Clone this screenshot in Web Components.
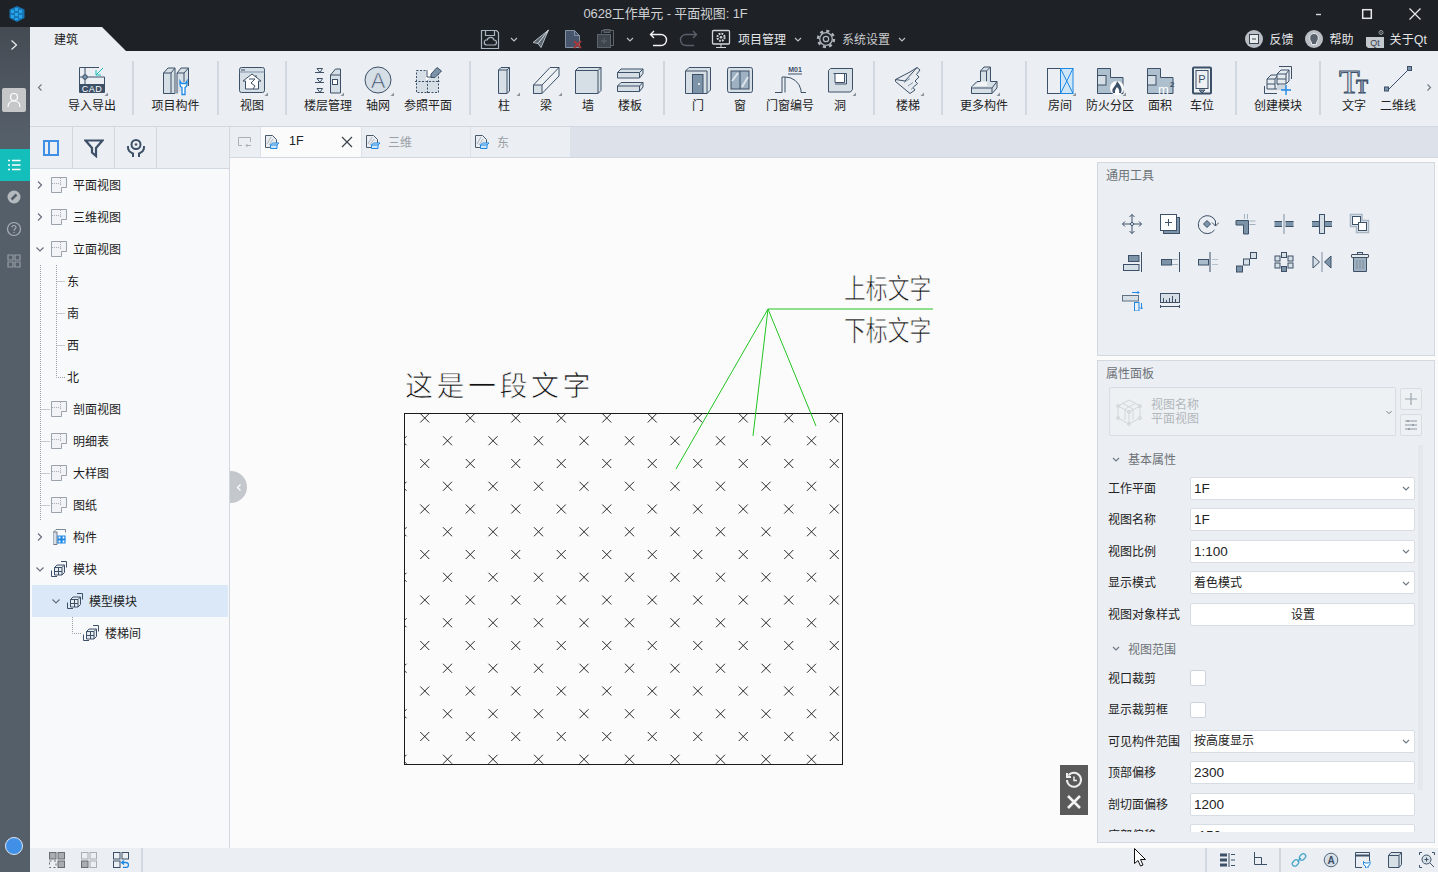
<!DOCTYPE html>
<html lang="zh">
<head>
<meta charset="utf-8">
<title>0628工作单元 - 平面视图: 1F</title>
<style>
html,body{margin:0;height:100%;overflow:hidden;background:#fbfbfb}
</style>
</head>
<body>
<app-shell></app-shell>
<script>
const D='#3c5068',L='#d6dee6',M='#7d93a8',B='#1e88e5',G='#a6adb5';
const SANS='font-family="Liberation Sans"';
const MORE='<path d="M32 28.5V32H28.5Z" fill="#8b949d" stroke="none"/>';
const cubes=(c=D)=>`<g stroke="${c}"><path d="M.5 9.5V15.5H6M15.5 6.5V.5H10"/><path d="M3.500 6.500L6 4H13.500V11.500L11 14H3.500Z" fill="#e6ebf0"/><path d="M3.500 6.500H11V14M11 6.500L13.500 4M7.500 6.500V14M3.500 10.500H11"/></g>`;
const ICONS={
  // barra de titulo
  logo:[18,`<g stroke="none"><path d="M9 1L16.500 4.500V13L9 17L1.500 13V4.500Z" fill="#1577b8"/><path d="M3 5h3v3H3zM7 3h3v3H7zM11 5h3v3h-3zM3 10h3v3H3zM7 8h3v3H7zM11 10h3v3h-3zM7 13h3v2H7z" fill="#2aa3e6"/></g>`],
  save:[22,`<g stroke="#a9b5c1" stroke-width="1.200"><path d="M2.500 2.500H17.500L19.500 4.500V20.500H2.500Z"/><path d="M6.500 2.500V7.500H15.500V2.500"/><path d="M7.500 17H15A2.500 2.500 0 0 0 15 12A3.500 3.500 0 0 0 8.300 11.800A2.600 2.600 0 0 0 7.500 17Z"/></g>`],
  chevw:[12,`<path d="M3 5L6 8L9 5" stroke="#b9c0c7" stroke-width="1.200"/>`],
  chevd:[12,`<path d="M3 5L6 8L9 5" stroke="#6f7b86" stroke-width="1.200"/>`],
  send:[22,`<path d="M18.500 2L3 14.500L8 15.500L11 19.500Z" fill="#5d6771" stroke="#b4bcc4"/><path d="M18.500 2L8 15.500" stroke="#d3d8dd"/>`],
  docx:[22,`<path d="M3.500 2.500H12.500L17.500 7.500V19.500H3.500Z" fill="#47556c" stroke="#8392a3"/><path d="M12.500 2.500V7.500H17.500" stroke="#8392a3"/><path d="M12 13L19 20M19 13L12 20" stroke="#a33a38" stroke-width="2"/>`],
  clip:[22,`<g stroke="#5d646b"><path d="M7.500 5.500V2.500H19.500V17.500H16.500"/><rect x="3.500" y="6.500" width="13" height="13" fill="#3f454c"/><path d="M10 10V16M7 13H13"/><rect x="10" y="1.500" width="6" height="3" fill="#3f454c"/></g>`],
  undo:[22,`<path d="M7 3L3.500 6.500L7 10M3.500 6.500H14A5.500 5.500 0 0 1 14 17.500H6" stroke="#f0f2f4" stroke-width="1.400"/>`],
  redo:[22,`<path d="M15 3L18.500 6.500L15 10M18.500 6.500H8A5.500 5.500 0 0 0 8 17.500H16" stroke="#59606a" stroke-width="1.400"/>`],
  mon:[22,`<g stroke="#d2d6da"><rect x="2.500" y="2.500" width="17" height="13.500" rx="1" stroke-width="1.300"/><path d="M11 16V19M6 19.500H16"/></g><circle cx="11" cy="9.200" r="3.600" stroke="#d2d6da" stroke-width="2" stroke-dasharray="1.800 1.030"/><circle cx="11" cy="9.200" r="1.300" fill="#d2d6da" stroke="none"/>`],
  gear:[22,`<circle cx="11" cy="11" r="8" stroke="#aeb5bc" stroke-width="2.400" stroke-dasharray="3.100 3.180"/><circle cx="11" cy="11" r="6.300" stroke="#aeb5bc" stroke-width="1.300"/><circle cx="11" cy="11" r="2.700" stroke="#aeb5bc" stroke-width="1.300"/>`],
  fb:[22,`<circle cx="11" cy="11" r="9" fill="#b9bfc5" stroke="none"/><rect x="6.500" y="6.500" width="9" height="9" fill="#e8eaec" stroke="#39424c"/><path d="M9 11H13" stroke="#39424c"/>`],
  bulb:[22,`<circle cx="11" cy="11" r="9" fill="#b9bfc5" stroke="none"/><path d="M8.500 14.500C5 10.500 7 5.500 11 5.500S17 10.500 13.500 14.500V16.500H8.500Z" fill="#59626c" stroke="#e8eaec"/>`],
  qt:[22,`<path d="M2 9H20V20H4L2 18Z" fill="#c4c9ce" stroke="none"/><text x="11" y="18" font-size="9" ${SANS} fill="#39424c" stroke="none" text-anchor="middle">Qt</text><circle cx="17" cy="4.500" r="2" stroke="#9aa2aa"/><path d="M16 3.500L18 5.500M18 3.500L16 5.500" stroke="#9aa2aa" stroke-width=".6"/>`],
  min:[12,`<path d="M3 6.500H8" stroke="#d7dadd" stroke-width="1.400"/>`],
  max:[12,`<rect x="1.700" y="1.700" width="8.600" height="8.600" stroke="#e4e6e8" stroke-width="1.500"/>`],
  cls:[12,`<path d="M.500 .500L11.500 11.500M11.500 .500L.500 11.500" stroke="#e4e6e8" stroke-width="1.300"/>`],
  // cinta
  cad:[32,`<path d="M3.500 21V3.500H23M9 3.500V21M3.500 13H28.500V21"/><circle cx="9" cy="13" r="2.300" fill="${M}"/><rect x="3" y="20" width="26" height="9" rx="1" fill="${D}" stroke="none"/><text x="16" y="28" font-size="9" ${SANS} fill="#fff" stroke="none" text-anchor="middle" letter-spacing=".5">CAD</text><path d="M27 4L20 11M20 6V11H25" stroke="#18bdb9"/>${MORE}`],
  comp:[32,`<path d="M3.500 29.500V9L8 4H15V29.500Z" fill="${L}"/><path d="M3.500 9H11V29.500M11 9L15 4"/><path d="M17 29.500V9L21 4H28.500V22" fill="${L}"/><path d="M17 9H24V18M24 9L28.500 4"/><path d="M20 17V20.500A3.500 3.500 0 0 0 22 23.500V30.500H25V23.500A3.500 3.500 0 0 0 27 20.500V17L25.500 19.500H21.500Z" fill="#fff" stroke="${B}" stroke-width="1.300"/>`],
  view:[32,`<rect x="3.500" y="3.500" width="25" height="25" rx="2" fill="${L}"/><path d="M5 6H9" /><path d="M3.500 8H28.500" stroke="${M}"/><path d="M16 10L25 17H22.500V25H9.500V17H7Z" fill="#fff"/><path d="M13 15H19L15 19L19 22L17 25" stroke="${D}"/><path d="M20 11V13" />${MORE}`],
  floors:[32,`<path d="M3 8.500H12M5 4.500H10.500L8 8.500ZM3 18.500H12M5 14.500H10.500L8 18.500ZM3 28.500H12M5 24.500H10.500L8 28.500Z"/><path d="M18.500 29V11L23.500 5H28.500V29Z" fill="${L}"/><path d="M18.500 11H28.500"/><rect x="20.500" y="15.500" width="5" height="5" fill="#fff"/>${MORE}`],
  axis:[32,`<circle cx="16" cy="16" r="13" fill="${L}"/><text x="16" y="24" font-size="22" ${SANS} fill="${D}" stroke="${L}" stroke-width=".7" text-anchor="middle">A</text>${MORE}`],
  ref:[32,`<rect x="4.500" y="6.500" width="22" height="22" fill="${L}" stroke-dasharray="2 1.500"/><path d="M15.500 6V29M3 17.500H28" stroke-dasharray="2 1.500"/><path d="M14 6H25V13H19L14 17Z" fill="#fff" stroke="none"/><path d="M19 10L25 3.500L29.500 7L23 13.500H19Z" fill="${M}"/><path d="M15 6V13H20" />`],
  col:[32,`<path d="M10.500 29.500V6L13 3.500H21.500V27L19 29.500Z" fill="${L}"/><path d="M10.500 6H19V29.500M19 6L21.500 3.500"/>${MORE}`],
  beam:[32,`<path d="M3.500 21L20 3.500H29V12L12 29.500H3.500Z" fill="#eef1f4"/><path d="M3.500 21H12V29.500H3.500Z" fill="${L}"/><path d="M12 21L29 3.500"/>${MORE}`],
  wall:[32,`<path d="M3.500 6.500L6.500 3.500H29V26.500L26 29.500H3.500Z" fill="${L}"/><path d="M3.500 6.500H26V29.500M26 6.500L29 3.500"/>`],
  slab:[32,`<path d="M3.500 8.500L7 5H29V9.500L25.500 14H3.500Z" fill="${L}"/><path d="M3.500 8.500H25.500V14M25.500 8.500L29 5"/><path d="M3.500 22L7 18.500H29V23L25.500 27.500H3.500Z" fill="${L}"/><path d="M3.500 22H25.500V27.500M25.500 22L29 18.500"/>`],
  door:[32,`<path d="M3.500 29.500V7L7 3.500H28.500V26L25 29.500Z" fill="${L}"/><path d="M3.500 7H25V29.500"/><rect x="10.500" y="10.500" width="10.500" height="19" fill="${M}"/><circle cx="17" cy="20" r="1" fill="#fff" stroke="none"/>`],
  win:[32,`<rect x="3.500" y="3.500" width="25" height="25" rx="2" fill="${L}"/><rect x="7" y="7" width="18" height="18" fill="#9db1c3"/><path d="M16 7V25"/><path d="M8 17L14 9M18 23L24 13" stroke="#dde4ea" stroke-width="2"/>`],
  mark:[32,`<text x="21" y="8" font-size="7" font-weight="700" ${SANS} fill="${D}" stroke="none" text-anchor="middle">M01</text><path d="M14 10H28"/><path d="M1 28.500H8V13H11V28.500M11 13A16 16 0 0 1 27 26V28.500H32"/>`],
  hole:[32,`<path d="M4.500 6.500L6.500 4.500H28.500V25.500L26.500 28H4.500Z" fill="${L}"/><path d="M9.500 9.500H20.500V18.500H11V9.500" fill="#fff"/><path d="M11 9.500H22.500V20H11" />${MORE}`],
  stair:[32,`<path d="M3.500 15.500L18 8L25 3.500L28 6L24.500 10.500L27 13L23 17L25.500 19.500L21 23.500L23 26L18 29.500L3.500 17.500Z" fill="#e8ecf0"/><path d="M12 18.500L18 14.500M16 22L21 18.500M19 25.500L23 22" stroke="${M}"/><path d="M3.500 15.500L13 17L25 3.500"/>${MORE}`],
  more:[32,`<path d="M3.500 29.500V23L9 17.500H12.500V7L16 3H22.500V17.500H29V24L24 29.500Z" fill="${L}"/><path d="M3.500 24H24V29.500M24 24L29 17.500M12.500 7H18.500V17.500M18.500 7L22.500 3" /><path d="M13 17.500H19V22H8L3.500 23.500Z" fill="#f2f4f6" stroke="none"/>${MORE}`],
  room:[32,`<rect x="3.500" y="4.500" width="13" height="25"/><rect x="16.500" y="4.500" width="12.500" height="25" fill="#cfe6f7" stroke="${B}"/><path d="M16.500 4.500L29 29.500M29 4.500L16.500 29.500" stroke="${B}"/>${MORE}`],
  fire:[32,`<path d="M3.500 4.500H16.500V13.500H29V29.500H3.500Z" fill="#aebfcd"/><rect x="3.500" y="11.500" width="8.500" height="9.500" fill="${L}"/><circle cx="23" cy="24" r="7" fill="#fff" stroke="none"/><path d="M19 29C16.500 24 22 23 23 17C26 21 29 24 27 29H25C26 26 24 24 23 23C22 25 20.500 26 21 29Z" fill="${D}" stroke="none"/>${MORE}`],
  area:[32,`<path d="M3.500 4.500H16.500V13.500H29V29.500H3.500Z" fill="#aebfcd"/><rect x="3.500" y="11.500" width="8.500" height="9.500" fill="${L}"/><text x="14" y="30" font-size="13" ${SANS} fill="#fff" stroke="none">m</text><text x="26" y="23" font-size="8" font-weight="700" ${SANS} fill="${D}" stroke="none">2</text>`],
  park:[32,`<rect x="7" y="3.500" width="18" height="26" rx="1" stroke-width="2" fill="#eef1f4"/><rect x="10" y="6.500" width="12" height="18" stroke-width="1"/><text x="16" y="19" font-size="11" ${SANS} fill="${D}" stroke="none" text-anchor="middle">P</text><path d="M13 26H19L16 29Z" fill="${M}"/>`],
  module:[32,`<path d="M2.500 22V29.500H15M17 2.500H29.500V15" stroke="${D}"/><path d="M5 15L9 11H16V25H5Z" fill="#e6ebf0"/><path d="M5 15H13V25M13 15L16 11M5 20H13"/><path d="M15 10L19 6H27V17L24 20H15Z" fill="#e6ebf0"/><path d="M15 10H24V20M24 10L27 6M15 15H24"/><path d="M15 21H24V26H15Z" fill="#cdd6df" stroke="none"/><path d="M24 21V31M19 26H29" stroke="${B}" stroke-width="1.400"/>`],
  textt:[32,`<text x="1" y="29" font-size="34" font-family="Liberation Serif" fill="${L}" stroke="${D}" stroke-width="1">T</text><text x="18" y="29" font-size="18" font-weight="700" font-family="Liberation Serif" fill="${M}" stroke="${D}" stroke-width=".8">T</text>`],
  line2:[32,`<path d="M6 26L26 6" stroke-width="1"/><rect x="2.500" y="23" width="4" height="4" fill="${M}"/><rect x="25.500" y="2.500" width="4" height="4" fill="${M}"/>`],
  arrL:[8,`<path d="M5.500 1.500L2.500 4.500L5.500 7.500" stroke="#6f7b86" stroke-width="1.200"/>`],
  arrR:[8,`<path d="M2.500 1.500L5.500 4.500L2.500 7.500" stroke="#6f7b86" stroke-width="1.200"/>`],
  // barra lateral
  rchev:[12,`<path d="M3.500 1.500L8.500 6L3.500 10.500" stroke="#eef0f2" stroke-width="1.200"/>`],
  user:[16,`<circle cx="8" cy="5" r="3.500" stroke="#fff" stroke-width="1.200"/><path d="M2 15C2 11 4.500 9 8 9S14 11 14 15" stroke="#fff" stroke-width="1.200"/>`],
  list:[14,`<path d="M5 2.500H13.500M5 7H13.500M5 11.500H13.500M1 2.500H3M1 7H3M1 11.500H3" stroke="#fff" stroke-width="1.300"/>`],
  rlink:[14,`<circle cx="7" cy="7" r="6.500" fill="#b4b9be" stroke="none"/><path d="M4.500 9.500L9.500 4.500" stroke="#555f6a" stroke-width="2.500"/>`],
  rhelp:[16,`<circle cx="8" cy="8" r="6.500" stroke="#a9afb5" stroke-width="1.200"/><path d="M6 6.300C6 3.800 10 4 10 6.300C10 8 8 7.800 8 9.800M8 11V12" stroke="#a9afb5" stroke-width="1.200"/>`],
  rgrid:[14,`<path d="M1 1h5v5H1zM8 1h5v5H8zM1 8h5v5H1zM8 8h5v5H8z" stroke="#969da4" stroke-width="1.200"/>`],
  // arbol y pestanas
  doc:[16,`<path d="M.500 .500H15.500V10.500H10.500V15.500H.500Z" fill="#f1f3f6" stroke="#9aa3ac"/><path d="M9.500 1V8.500M1 6.500H9.500" stroke="#a6adb5" stroke-dasharray="1 1"/>`],
  bld:[16,`<path d="M2.500 15.500V3L5 .500H14.500V3.500" stroke="#7b8896"/><path d="M2.500 3H6V15.500H2.500" fill="#d8dee5" stroke="#6d7b8a"/><path d="M7 7h3v3H7zM11 7h3v3h-3zM7 11h3v3H7zM11 11h3v3h-3z" stroke="${B}" stroke-width="1.200"/>`],
  cube:[16,cubes()],
  tab:[16,`<path d="M1.500 1.500H8.500L12.500 5.500V13.500H1.500Z" fill="#e9edf1" stroke="#4a5a6b"/><path d="M3 10L7 3M5 11L9 5" stroke="#aab4be"/><path d="M6.500 11L8.500 9H15L13 11V14.500H6.500Z" fill="#cfe6f7" stroke="${B}"/><path d="M6.500 11H13" stroke="${B}"/>`],
  tabpin:[16,`<path d="M5 11.500H1.500V3.500H13.500V8" stroke="#a9b0b7"/><path d="M9 11.500H14M9 11.500L10.500 10M9 11.500L10.500 13" stroke="#a9b0b7"/>`],
  x:[12,`<path d="M1 1L11 11M11 1L1 11" stroke="#3a4149" stroke-width="1.200"/>`],
  side:[16,`<rect x="1" y="1" width="14" height="14" stroke="#3f8fe6" stroke-width="2"/><path d="M6 1V15" stroke="#3f8fe6" stroke-width="2"/>`],
  filter:[20,`<path d="M1.500 2.500H18.500L12 10V18L8 14.500V10Z" stroke="${D}" stroke-width="2.200"/>`],
  hand:[20,`<circle cx="10" cy="6.500" r="4.500" stroke="${D}" stroke-width="2"/><circle cx="10" cy="6.500" r="1.300" fill="${D}" stroke="none"/><path d="M2 8C1.500 13 4 14 7 15.500V19M18 8C18.500 13 16 14 13 15.500V19" stroke="${D}" stroke-width="2"/>`],
  // herramientas
  tmove:[22,`<path d="M11 1.500V20.500M1.500 11H20.500M8.500 4L11 1.500L13.500 4M8.500 18L11 20.500L13.500 18M4 8.500L1.500 11L4 13.500M18 8.500L20.500 11L18 13.500"/><circle cx="11" cy="11" r="1.500" fill="#fff"/>`],
  tcopy:[22,`<rect x="4.500" y="4.500" width="16" height="16" fill="${M}"/><rect x="1.500" y="1.500" width="16" height="16" fill="#fff"/><path d="M9.500 6V13M6 9.500H13"/>`],
  trot:[22,`<path d="M18.500 8A9 9 0 1 0 17.500 17"/><path d="M15 9.500L18.500 13L22 9.500M18.500 13V8"/><path d="M10 7.500L13.500 11L10 14.500L6.500 11Z" fill="${M}"/>`],
  ttrim:[22,`<path d="M1 7.500H13.500V21H8.500V12H1Z" fill="${M}"/><path d="M9.500 1V6M12.500 1V6M14.500 8H20.500M14.500 11.500H20.500" stroke="#9fb0bf"/>`],
  tsplit:[22,`<path d="M1.500 8.500H9V13.500H1.500ZM12.500 8.500H20.500V13.500H12.500Z" fill="${M}" stroke="none"/><path d="M1.500 8.500H9M1.500 13.500H9M12.500 8.500H20.500M12.500 13.500H20.500"/><path d="M11 1V21" stroke="#7f8fa0"/>`],
  tsplit2:[22,`<path d="M1 8.500H8.500V13.500H1ZM13.500 8.500H21V13.500H13.500Z" fill="${M}" stroke="none"/><path d="M1 8.500H8.500M1 13.500H8.500M13.500 8.500H21M13.500 13.500H21"/><rect x="8.500" y="1.500" width="5" height="19" fill="${L}"/>`],
  tjoin:[22,`<path d="M1.500 1.500H13V7.500H19.500V19.500H7.500V13.500H1.500Z" stroke="#a9b6c3" stroke-width="1.500" fill="#e6ebf0"/><rect x="3.500" y="3.500" width="8" height="8" fill="#fff"/><rect x="9.500" y="9.500" width="8" height="8" fill="#fff"/>`],
  tal1:[22,`<path d="M20.500 1V21"/><rect x="7.500" y="4.500" width="10.500" height="6" fill="${M}"/><rect x="2.500" y="13.500" width="15.500" height="6" fill="${L}"/>`],
  tof1:[22,`<path d="M20.500 1V21"/><rect x="2.500" y="8.500" width="10" height="5.500" fill="${M}"/><path d="M13 8.500H19M13 13.500H19" stroke="#9fb0bf"/>`],
  tof2:[22,`<path d="M13 1V21"/><rect x="1.500" y="8.500" width="10" height="5.500" fill="#a9bccb"/><path d="M15 8.500H21M15 13.500H21" stroke="#b6c2cd"/>`],
  tarr:[22,`<rect x="1.500" y="15" width="6" height="6" fill="${M}"/><rect x="8.500" y="8" width="6" height="6" fill="${L}"/><rect x="15.500" y="1.500" width="6" height="6" fill="${L}"/>`],
  tring:[22,`<rect x="8.500" y="1.500" width="5" height="5" fill="${L}"/><rect x="2" y="5" width="5" height="5" fill="${L}"/><rect x="15" y="5" width="5" height="5" fill="${L}"/><rect x="2" y="12" width="5" height="5" fill="${L}"/><rect x="15" y="12" width="5" height="5" fill="${L}"/><rect x="8.500" y="15.500" width="5" height="5" fill="${M}"/>`],
  tmir:[22,`<path d="M11 1V21" stroke="#7f8fa0"/><path d="M2 5L8.500 11L2 17Z" fill="${L}"/><path d="M20 5L13.500 11L20 17Z" fill="${M}"/>`],
  ttrash:[22,`<rect x="8.500" y="1.500" width="5" height="2" fill="${L}"/><rect x="1.500" y="3.500" width="17" height="3" rx=".5" fill="#e4e9ee" transform="translate(1)"/><path d="M4.500 6.500H17.500V20.500H4.500Z" fill="#9fb0bf"/><path d="M8 9V18M11 9V18M14 9V18" stroke="#7f8fa0"/>`],
  tblue:[22,`<rect x="1.500" y="6.500" width="16" height="5.500" fill="${L}" stroke="#5e7084"/><path d="M11 3.500H18M16.500 2L18 3.500L16.500 5" stroke="${B}"/><rect x="13.500" y="13.500" width="4.500" height="8.500" stroke="${B}"/><path d="M20.500 14V20M19 18.500L20.500 20L22 18.500" stroke="${B}"/>`],
  truler:[22,`<g transform="translate(0 3)"><rect x="1.500" y="1.500" width="19" height="9" fill="${L}"/><path d="M4.500 11V6M7.500 11V8M10.500 11V6M13.500 11V4M16.500 11V7"/><path d="M1.500 14.500H20.500M1.500 13V16M20.500 13V16"/></g>`],
  // panel de propiedades
  pcube:[28,`<g stroke="#d2d6db"><path d="M14 2L25 8V20L14 26L3 20V8Z"/><path d="M3 8L14 14L25 8M14 14V26M7 5L18 11V22M10 22V11L21 5"/><circle cx="14" cy="14" r="1.500"/><circle cx="3" cy="8" r="1.500"/><circle cx="25" cy="8" r="1.500"/><circle cx="3" cy="20" r="1.500"/><circle cx="25" cy="20" r="1.500"/><circle cx="14" cy="26" r="1.500"/></g>`],
  pplus:[14,`<path d="M7 1V13M1 7H13" stroke="#9aa4ae" stroke-width="1.200"/>`],
  pset:[14,`<path d="M1 3H13M1 7H13M1 11H13" stroke="#8d97a1"/><path d="M4 2V4M9 6V8M5 10V12" stroke="#8d97a1" stroke-width="1.600"/>`],
  // barra de estado
  s1:[16,`<rect x=".5" y=".5" width="6.500" height="6.500" fill="#a9adb1" stroke="#666c72"/><rect x="9" y=".5" width="6.500" height="6.500" fill="#a9adb1" stroke="#666c72"/><rect x="9" y="9" width="6.500" height="6.500" fill="#a9adb1" stroke="#666c72"/><rect x=".5" y="9" width="6.500" height="6.500" stroke="#666c72" stroke-dasharray="2 2.500"/>`],
  s2:[16,`<rect x=".5" y=".5" width="6.500" height="6.500" stroke="#a9adb1"/><rect x="9" y=".5" width="6.500" height="6.500" stroke="#a9adb1"/><rect x="9" y="9" width="6.500" height="6.500" stroke="#a9adb1"/><rect x=".5" y="9" width="6.500" height="6.500" fill="#a9adb1" stroke="#666c72"/>`],
  s3:[16,`<rect x=".5" y=".5" width="6.500" height="6.500"/><rect x="9" y=".5" width="6.500" height="6.500"/><rect x=".5" y="9" width="6.500" height="6.500"/><path d="M11 8.500L8.500 10.500L11 12.500M8.500 10.500H13A2.500 2.500 0 0 1 13 15.500H10" stroke="${B}" stroke-width="1.300"/>`],
  r1:[16,`<path d="M1 1.500H8V4.500H1ZM1 6.500H8V9.500H1ZM1 11.500H8V14.500H1Z" fill="${D}" stroke="none"/><path d="M10 1V15M12 2.500H16M12 8H16M12 13.500H16"/>`],
  r2:[16,`<path d="M3.500 0V12.500H16M3.500 5.500H10.500V12.500"/>`],
  r3:[16,`<path d="M6.500 9.500L10 6" stroke="#46a6c8" stroke-width="1.300"/><rect x="1" y="8.500" width="7" height="5" rx="2.500" transform="rotate(-45 4.500 11)" stroke="#46a6c8" stroke-width="1.300"/><rect x="8" y="2.500" width="7" height="5" rx="2.500" transform="rotate(-45 11.500 5)" stroke="#46a6c8" stroke-width="1.300"/>`],
  r4:[16,`<circle cx="8" cy="8" r="6.800" fill="${L}" stroke="#53677c"/><text x="8" y="11.500" font-size="10" font-weight="700" ${SANS} fill="${D}" stroke="none" text-anchor="middle">A</text>`],
  r5:[16,`<path d="M.5 15.500V.5H14.500V9M.5 15.500H7"/><path d="M.5 3.500H14.500" stroke-width="2"/><path d="M8.500 9.500V12A2.500 2.500 0 0 0 10.500 14V16H13V14A2.500 2.500 0 0 0 15 12V9.500L13.500 11H10Z" fill="#fff" stroke="${B}"/>`],
  r6:[16,`<path d="M1.500 15.500V3.500L4 .5H14.500V12.500L12 15.500Z" fill="${L}"/><path d="M1.500 3.500H12V15.500M12 3.500L14.500 .5"/>`],
  r7:[16,`<path d="M.5 3V.5H3M13 .5H15.500V3M.5 13V15.500H3"/><circle cx="7.500" cy="7.500" r="4.500" fill="${L}"/><path d="M5.500 7.500H9.500M7.500 5.500V9.500M11 11L15 15"/>`]
};

class XIcon extends HTMLElement {
  connectedCallback() {
    if (this.shadowRoot) return;
    const [vb, inner] = ICONS[this.getAttribute('name')];
    const s = this.getAttribute('size') || vb;
    this.attachShadow({ mode: 'open' }).innerHTML = `
    <style>:host{display:inline-flex;flex:none;width:${s}px;height:${s}px}svg{display:block}</style>
    <svg width="${s}" height="${s}" viewBox="0 0 ${vb} ${vb}" fill="none" stroke="${D}" stroke-width="1">${inner}</svg>`;
  }
}

class TitleBar extends HTMLElement {
  constructor() {
    super();
    this.attachShadow({ mode: 'open' }).innerHTML = `
    <style>
:host{display:block;height:27px;background:#1e2126;color:#d4d6d8}
.bar{display:flex;align-items:center;height:27px}
.logo{margin-left:8px}
.title{flex:1;text-align:center;font-size:13px;letter-spacing:-.15px;color:#cfd1d3;margin-left:10px;white-space:nowrap;padding-bottom:2px}
.win{display:flex;align-items:center;margin-right:-1px}
.win div{width:48px;display:flex;justify-content:center}
    </style>
    <div class="bar">
      <x-icon class="logo" name="logo"></x-icon>
      <div class="title">0628工作单元 - 平面视图: 1F</div>
      <div class="win">
        <div><x-icon name="min"></x-icon></div>
        <div><x-icon name="max"></x-icon></div>
        <div><x-icon name="cls"></x-icon></div>
      </div>
    </div>`;
  }
}

class SideRail extends HTMLElement {
  constructor() {
    super();
    this.attachShadow({ mode: 'open' }).innerHTML = `
    <style>
:host{display:flex;flex-direction:column;align-items:center;flex:none;width:30px;box-sizing:border-box;padding-right:2px;background:linear-gradient(#454b53 0,#555f6a 110px,#555f6a 100%)}
.top{height:36px;display:flex;align-items:center;justify-content:center}
.user{width:24px;height:24px;margin-top:25px;background:#c6c7c9;border-radius:2px;display:flex;align-items:center;justify-content:center}
.item{width:28px;height:32px;display:flex;align-items:center;justify-content:center}
.on{width:30px;box-sizing:border-box;padding-right:2px;margin-right:-2px;background:#14bfbb;margin-top:37px}
.dot{margin-top:auto;margin-bottom:17px;width:16px;height:16px;border:1px solid #dfe6ee;border-radius:50%;background:#4190e8}
    </style>
    <div class="top"><x-icon name="rchev"></x-icon></div>
    <div class="user"><x-icon name="user"></x-icon></div>
    <div class="item on"><x-icon name="list"></x-icon></div>
    <div class="item"><x-icon name="rlink"></x-icon></div>
    <div class="item"><x-icon name="rhelp"></x-icon></div>
    <div class="item"><x-icon name="rgrid"></x-icon></div>
    <div class="dot"></div>`;
  }
}

class MenuRow extends HTMLElement {
  constructor() {
    super();
    this.attachShadow({ mode: 'open' }).innerHTML = `
    <style>
:host{display:flex;align-items:center;height:24px;background:#1e2126;color:#e4e6e8;font-size:12px}
.tab{width:96px;height:24px;flex:none;background:#ebeef2;color:#222;clip-path:polygon(0 0,72px 0,96px 100%,0 100%);display:flex;align-items:center;padding:0 0 2px 24px;box-sizing:border-box}
.tools{display:flex;align-items:center;margin-left:353px}
.right{display:flex;align-items:center;margin-left:auto;margin-right:11px}
.t{white-space:nowrap;padding-bottom:2px}
    </style>
    <div class="tab">建筑</div>
    <div class="tools">
      <x-icon name="save"></x-icon>
      <x-icon name="chevw" style="margin-left:7px"></x-icon>
      <x-icon name="send" style="margin-left:10px"></x-icon>
      <x-icon name="docx" style="margin-left:10px"></x-icon>
      <x-icon name="clip" style="margin-left:10px"></x-icon>
      <x-icon name="chevw" style="margin-left:8px"></x-icon>
      <x-icon name="undo" style="margin-left:11px"></x-icon>
      <x-icon name="redo" style="margin-left:9px"></x-icon>
      <x-icon name="mon" style="margin-left:10px"></x-icon>
      <span class="t" style="margin-left:6px">项目管理</span>
      <x-icon name="chevw" style="margin-left:6px"></x-icon>
      <x-icon name="gear" style="margin-left:11px"></x-icon>
      <span class="t" style="margin-left:5px;color:#c9cbcd">系统设置</span>
      <x-icon name="chevw" style="margin-left:6px"></x-icon>
    </div>
    <div class="right">
      <x-icon name="fb"></x-icon>
      <span class="t" style="margin-left:5px">反馈</span>
      <x-icon name="bulb" style="margin-left:9px"></x-icon>
      <span class="t" style="margin-left:5px">帮助</span>
      <x-icon name="qt" style="margin-left:10px"></x-icon>
      <span class="t" style="margin-left:4px;letter-spacing:.2px">关于Qt</span>
    </div>`;
  }
}

class RbBtn extends HTMLElement {
  connectedCallback() {
    if (this.shadowRoot) return;
    const w = this.getAttribute('w') || 42;
    this.attachShadow({ mode: 'open' }).innerHTML = `
    <style>
:host{display:flex;flex-direction:column;align-items:center;flex:none;width:${w}px}
.i{height:32px;margin-top:13px}
.l{margin-top:2px;line-height:16px;font-size:12px;color:#222;white-space:nowrap}
    </style>
    <x-icon class="i" name="${this.getAttribute('icon')}"></x-icon>
    <div class="l"><slot></slot></div>`;
  }
}

class RbGroup extends HTMLElement {
  connectedCallback() {
    if (this.shadowRoot) return;
    const left = this.hasAttribute('left');
    const w = +this.getAttribute('w') + 2;
    this.attachShadow({ mode: 'open' }).innerHTML = `
    <style>
:host{display:flex;flex:none;width:${w}px;height:75px}
.in{flex:1;display:flex;justify-content:${left ? 'flex-start' : 'center'};padding-left:${left ? 12 : 0}px}
.sep{width:2px;height:54px;margin-top:10px;background:#d2d8e0;flex:none;display:${this.hasAttribute('last') ? 'none' : 'block'}}
    </style>
    <div class="in"><slot></slot></div><div class="sep"></div>`;
  }
}

class RibbonBar extends HTMLElement {
  constructor() {
    super();
    this.attachShadow({ mode: 'open' }).innerHTML = `
    <style>
:host{display:flex;flex:none;height:75px;background:#ebeef2;border-bottom:1px solid #d2d8e0;position:relative}
.la{width:22px;flex:none;display:flex;align-items:center;height:72px;padding-left:6px;box-sizing:border-box}
.ra{position:absolute;right:5px;top:32px}
    </style>
    <div class="la"><x-icon name="arrL"></x-icon></div>
    <rb-group w="80"><rb-btn icon="cad" w="58">导入导出</rb-btn></rb-group>
    <rb-group w="83"><rb-btn icon="comp" w="58">项目构件</rb-btn></rb-group>
    <rb-group w="66"><rb-btn icon="view">视图</rb-btn></rb-group>
    <rb-group w="182"><rb-btn icon="floors" w="58">楼层管理</rb-btn><rb-btn icon="axis">轴网</rb-btn><rb-btn icon="ref" w="58">参照平面</rb-btn></rb-group>
    <rb-group w="192"><rb-btn icon="col">柱</rb-btn><rb-btn icon="beam">梁</rb-btn><rb-btn icon="wall">墙</rb-btn><rb-btn icon="slab">楼板</rb-btn></rb-group>
    <rb-group w="208"><rb-btn icon="door">门</rb-btn><rb-btn icon="win">窗</rb-btn><rb-btn icon="mark" w="58">门窗编号</rb-btn><rb-btn icon="hole">洞</rb-btn></rb-group>
    <rb-group w="66"><rb-btn icon="stair">楼梯</rb-btn></rb-group>
    <rb-group w="82"><rb-btn icon="more" w="58">更多构件</rb-btn></rb-group>
    <rb-group w="208"><rb-btn icon="room">房间</rb-btn><rb-btn icon="fire" w="58">防火分区</rb-btn><rb-btn icon="area">面积</rb-btn><rb-btn icon="park">车位</rb-btn></rb-group>
    <rb-group w="82"><rb-btn icon="module" w="58">创建模块</rb-btn></rb-group>
    <rb-group w="100" left last><rb-btn icon="textt">文字</rb-btn><rb-btn icon="line2" w="46">二维线</rb-btn></rb-group>
    <x-icon class="ra" name="arrR"></x-icon>`;
  }
}

const GUT = {
  closed: [21, `<path d="M8 12.500L11.500 16L8 19.500" stroke="#67727d" stroke-width="1.200"/>`],
  open: [21, `<path d="M6.500 14.500L10 18L13.500 14.500" stroke="#67727d" stroke-width="1.200"/>`],
  branch: [21, `<path d="M10.500 0V32M10.500 16.500H20" stroke="#98a0a8" stroke-dasharray="1 1"/>`],
  leaf: [37, `<path d="M10.500 0V32M26.500 0V32M26.500 16.500H35" stroke="#98a0a8" stroke-dasharray="1 1"/>`],
  leafEnd: [37, `<path d="M10.500 0V32M26.500 0V16.500H35" stroke="#98a0a8" stroke-dasharray="1 1"/>`],
  sub: [37, `<path d="M22.500 14.500L26 18L29.500 14.500" stroke="#67727d" stroke-width="1.200"/>`],
  subleaf: [53, `<path d="M42.500 0V16.500H52" stroke="#98a0a8" stroke-dasharray="1 1"/>`]
};

class TreeRow extends HTMLElement {
  connectedCallback() {
    if (this.shadowRoot) return;
    const [w, g] = GUT[this.getAttribute('gutter')];
    const ic = this.getAttribute('icon');
    this.attachShadow({ mode: 'open' }).innerHTML = `
    <style>
:host{display:flex;align-items:center;height:32px;font-size:12px;color:#1c1c1c}
:host([selected]){background:linear-gradient(#dae8f7,#dae8f7) 2px 0/196px 100% no-repeat}
svg{display:block;flex:none}
.l{margin-left:${ic ? 6 : 0}px;white-space:nowrap;padding-bottom:2px}
    </style>
    <svg width="${w}" height="32" viewBox="0 0 ${w} 32" fill="none">${g}</svg>
    ${ic ? `<x-icon name="${ic}"></x-icon>` : ''}
    <div class="l"><slot></slot></div>`;
  }
}

class TreePane extends HTMLElement {
  constructor() {
    super();
    this.attachShadow({ mode: 'open' }).innerHTML = `
    <style>
:host{display:flex;flex-direction:column;flex:none;width:199px;background:#f8f9fb;border-right:1px solid #d2d8e0}
.tabs{display:flex;height:41px;flex:none;background:#ebeef2;border-bottom:1px solid #d2d8e0}
.tabs div{width:41px;display:flex;align-items:center;justify-content:center;border-right:1px solid #d2d8e0;box-sizing:content-box}
.tabs div:first-child{width:42px}
    </style>
    <div class="tabs">
      <div><x-icon name="side"></x-icon></div>
      <div style="padding-left:1px;width:40px"><x-icon name="filter"></x-icon></div>
      <div style="padding-left:1px;width:40px"><x-icon name="hand"></x-icon></div>
    </div>
    <tree-row gutter="closed" icon="doc">平面视图</tree-row>
    <tree-row gutter="closed" icon="doc">三维视图</tree-row>
    <tree-row gutter="open" icon="doc">立面视图</tree-row>
    <tree-row gutter="leaf">东</tree-row>
    <tree-row gutter="leaf">南</tree-row>
    <tree-row gutter="leaf">西</tree-row>
    <tree-row gutter="leafEnd">北</tree-row>
    <tree-row gutter="branch" icon="doc">剖面视图</tree-row>
    <tree-row gutter="branch" icon="doc">明细表</tree-row>
    <tree-row gutter="branch" icon="doc">大样图</tree-row>
    <tree-row gutter="branch" icon="doc">图纸</tree-row>
    <tree-row gutter="closed" icon="bld">构件</tree-row>
    <tree-row gutter="open" icon="cube">模块</tree-row>
    <tree-row gutter="sub" icon="cube" selected>模型模块</tree-row>
    <tree-row gutter="subleaf" icon="cube">楼梯间</tree-row>`;
  }
}

class DocTab extends HTMLElement {
  connectedCallback() {
    if (this.shadowRoot) return;
    const on = this.hasAttribute('active');
    this.attachShadow({ mode: 'open' }).innerHTML = `
    <style>
:host{display:flex;align-items:center;flex:none;box-sizing:border-box;height:30px;width:${this.getAttribute('w')}px;padding-left:3px;margin-right:1px;background:${on ? '#fbfbfb' : '#ebeef2'};color:${on ? '#222' : '#9aa0a6'};font-size:12px}
.l{margin-left:${on ? 9 : 7}px;flex:1;padding-bottom:2px;${on ? 'font-size:12.500px' : ''}}
.c{margin-right:8px}
    </style>
    <x-icon name="tab"></x-icon>
    <div class="l"><slot></slot></div>
    ${on ? '<x-icon class="c" name="x"></x-icon>' : ''}`;
  }
}

class TabStrip extends HTMLElement {
  constructor() {
    super();
    this.attachShadow({ mode: 'open' }).innerHTML = `
    <style>
:host{display:flex;flex:none;height:30px;background:#dde2ea;border-bottom:1px solid #d2d8e0}
.pin{width:30px;margin-right:1px;background:#ebeef2;display:flex;align-items:center;justify-content:center}
    </style>
    <div class="pin"><x-icon name="tabpin"></x-icon></div>
    <doc-tab w="100" active>1F</doc-tab>
    <doc-tab w="108">三维</doc-tab>
    <doc-tab w="99">东</doc-tab>`;
  }
}

class CadView extends HTMLElement {
  constructor() {
    super();
    let cross = '';
    for (let r = 0; r < 16; r++) {
      const y = 418 + r * 22.75;
      for (let c = 0; c < 10; c++) {
        const x = (r % 2 ? 402 : 424.75) + c * 45.5;
        cross += `M${x - 4.5} ${y - 4.5}L${x + 4.5} ${y + 4.5}M${x + 4.5} ${y - 4.5}L${x - 4.5} ${y + 4.5}`;
      }
    }
    this.attachShadow({ mode: 'open' }).innerHTML = `
    <style>
:host{display:block;flex:1;position:relative;background:#fbfbfb;overflow:hidden}
svg.d{position:absolute;left:0;top:0}
.cad{font-family:"Noto Sans CJK SC",sans-serif;font-size:28px;fill:#111;stroke:#fbfbfb;stroke-width:.75px}
.handle{position:absolute;left:0;top:313px;width:17px;height:32px;background:#c4c8cc;border-radius:0 16px 16px 0;display:flex;align-items:center;justify-content:center}
.hist{position:absolute;left:830px;top:607px;width:28px;height:50px;background:#5a5a5a;display:flex;flex-direction:column;align-items:center;justify-content:center;gap:6px}
.dock{position:absolute;right:3px;top:4px;bottom:5px;width:338px;display:flex;flex-direction:column;gap:4px}
    </style>
    <svg class="d" width="867" height="690" viewBox="230 158 867 690">
      <defs><clipPath id="clip"><rect x="404.500" y="413.500" width="438" height="351"/></clipPath></defs>
      <path clip-path="url(#clip)" d="${cross}" stroke="#111" stroke-width=".9" fill="none"/>
      <rect x="404.500" y="413.500" width="438" height="351" fill="none" stroke="#1a1a1a"/>
      <text class="cad" transform="translate(844 299) scale(.78 1)">上标文字</text>
      <text class="cad" transform="translate(844 341) scale(.78 1)">下标文字</text>
      <text class="cad" x="405" y="396" letter-spacing="3.500">这是一段文字</text>
      <path d="M768 309H933" stroke="#22c422" stroke-width="1.200" fill="none"/>
      <path d="M768 309L676 469M768 309L753 436M768 309L816 426" stroke="#22c422" fill="none"/>
    </svg>
    <div class="handle"><x-icon name="arrL" style="filter:brightness(2.400)"></x-icon></div>
    <div class="hist">
      <svg width="18" height="18" viewBox="0 0 18 18" fill="none" stroke="#eee" stroke-width="2"><path d="M3.500 4.500A7 7 0 1 1 2 9"/><path d="M2 2V6H6"/><path d="M9 5.500V9.500H12" stroke-width="1.500"/></svg>
      <svg width="14" height="14" viewBox="0 0 14 14" fill="none" stroke="#f2f2f2" stroke-width="2.600"><path d="M1 1L13 13M13 1L1 13"/></svg>
    </div>
    <div class="dock"><slot></slot></div>`;
  }
}

class ToolPanel extends HTMLElement {
  constructor() {
    super();
    const names = ['tmove','tcopy','trot','ttrim','tsplit','tsplit2','tjoin','tal1','tof1','tof2','tarr','tring','tmir','ttrash','tblue','truler'];
    this.attachShadow({ mode: 'open' }).innerHTML = `
    <style>
:host{display:block;flex:none;height:194px;box-sizing:border-box;background:#ebeef2;border:1px solid #d2d8e0;font-size:12px}
.h{padding:6px 0 0 8px;line-height:14px;color:#6d7278}
.g{display:grid;grid-template-columns:repeat(7,38px);grid-auto-rows:38px;margin:22px 0 0 15px}
.g div{display:flex;align-items:center;justify-content:center}
    </style>
    <div class="h">通用工具</div>
    <div class="g">${names.map(n => `<div><x-icon name="${n}"></x-icon></div>`).join('')}</div>`;
  }
}

class PropRow extends HTMLElement {
  connectedCallback() {
    if (this.shadowRoot) return;
    const t = this.getAttribute('type') || 'input';
    const val = this.getAttribute('value') || '';
    const cjk = /[^\x00-\x7f]/.test(val) ? ' style="font-size:12px"' : '';
    let f;
    if (t == 'check') f = '<div class="ck"></div>';
    else if (t == 'btn') f = `<div class="f b">${val}</div>`;
    else if (t == 'select') f = `<div class="f s"><span${cjk}>${val}</span><x-icon name="chevd"></x-icon></div>`;
    else f = `<div class="f i">${val}</div>`;
    this.attachShadow({ mode: 'open' }).innerHTML = `
    <style>
:host{display:flex;align-items:center;height:31.500px;flex:none;font-size:12px;color:#222}
.l{width:82px;flex:none;white-space:nowrap;padding-bottom:2px}
.f{width:225px;height:23px;box-sizing:border-box;background:#fff;border:1px solid #d8dde4;border-radius:2px;display:flex;align-items:center;padding:0 2px 0 3px;font-size:13.500px}
.s{justify-content:space-between}
.s span{line-height:1}
.b{justify-content:center;font-size:12px;padding-bottom:2px}
.ck{width:16px;height:16px;box-sizing:border-box;background:#fff;border:1px solid #cdd3db;border-radius:2px}
    </style>
    <div class="l"><slot></slot></div>${f}`;
  }
}

class PropSection extends HTMLElement {
  constructor() {
    super();
    this.attachShadow({ mode: 'open' }).innerHTML = `
    <style>
:host{display:flex;align-items:center;flex:none;font-size:12px;color:#6d7278;box-sizing:border-box}
x-icon{margin:0 6px 0 2px}
    </style>
    <x-icon name="chevd"></x-icon><slot></slot>`;
  }
}

class PropPanel extends HTMLElement {
  constructor() {
    super();
    this.attachShadow({ mode: 'open' }).innerHTML = `
    <style>
:host{display:flex;flex-direction:column;flex:1;min-height:0;box-sizing:border-box;background:#ebeef2;border:1px solid #d2d8e0;font-size:12px}
.h{padding:6px 0 0 8px;line-height:14px;color:#6d7278}
.top{display:flex;margin:6px 0 0 11px;flex:none}
.pick{width:287px;height:49px;box-sizing:border-box;border:1px solid #d8dde4;border-radius:2px;background:#eef1f4;display:flex;align-items:center;padding-left:5px;color:#b2b7bc;line-height:14px}
.pick .n{margin-left:7px;flex:1;padding-top:1px}
.pick x-icon{margin-right:1px}
.btns{margin-left:4px;display:flex;flex-direction:column;gap:4px;padding-top:1px}
.btns div{width:22px;height:22px;box-sizing:border-box;border:1px solid #d8dde4;border-radius:2px;background:#eef1f4;display:flex;align-items:center;justify-content:center}
.body{flex:1;min-height:0;display:flex;margin:9px 0 10px 10px;overflow:hidden}
.rows{display:flex;flex-direction:column;width:307px;flex:none}
.track{width:5px;height:345px;margin-left:3px;background:#e5e8ec;flex:none}
prop-section.a{height:27.500px}
prop-section.b{height:32.500px;padding-top:4px}
    </style>
    <div class="h">属性面板</div>
    <div class="top">
      <div class="pick"><x-icon name="pcube"></x-icon><div class="n">视图名称<br>平面视图</div><x-icon name="chevd" size="10"></x-icon></div>
      <div class="btns"><div><x-icon name="pplus"></x-icon></div><div><x-icon name="pset"></x-icon></div></div>
    </div>
    <div class="body">
      <div class="rows">
        <prop-section class="a">基本属性</prop-section>
        <prop-row type="select" value="1F">工作平面</prop-row>
        <prop-row value="1F">视图名称</prop-row>
        <prop-row type="select" value="1:100">视图比例</prop-row>
        <prop-row type="select" value="着色模式">显示模式</prop-row>
        <prop-row type="btn" value="设置">视图对象样式</prop-row>
        <prop-section class="b">视图范围</prop-section>
        <prop-row type="check">视口裁剪</prop-row>
        <prop-row type="check">显示裁剪框</prop-row>
        <prop-row type="select" value="按高度显示">可见构件范围</prop-row>
        <prop-row value="2300">顶部偏移</prop-row>
        <prop-row value="1200">剖切面偏移</prop-row>
        <prop-row value="-150">底部偏移</prop-row>
      </div>
      <div class="track"></div>
    </div>`;
  }
}

class StatusBar extends HTMLElement {
  constructor() {
    super();
    this.attachShadow({ mode: 'open' }).innerHTML = `
    <style>
:host{display:flex;align-items:center;flex:none;height:24px;background:#ebeef2;position:relative}
.l{display:flex;gap:16px;margin-left:19px}
.sep{width:2px;height:24px;background:#d2d8e0;flex:none}
.r{display:flex;align-items:center;margin-left:auto;margin-right:3px}
.r x-icon{margin-left:16px}
    </style>
    <div class="l"><x-icon name="s1"></x-icon><x-icon name="s2"></x-icon><x-icon name="s3"></x-icon></div>
    <div class="sep" style="margin-left:12px"></div>
    <div class="r">
      <div class="sep" style="margin-right:-4px"></div>
      <x-icon name="r1"></x-icon><x-icon name="r2"></x-icon>
      <div class="sep" style="margin:0 -6px 0 12px"></div>
      <x-icon name="r3"></x-icon><x-icon name="r4"></x-icon><x-icon name="r5"></x-icon><x-icon name="r6"></x-icon><x-icon name="r7"></x-icon>
    </div>`;
  }
}

class AppShell extends HTMLElement {
  constructor() {
    super();
    this.attachShadow({ mode: 'open' }).innerHTML = `
    <style>
:host{display:flex;flex-direction:column;position:relative;width:1438px;height:872px;overflow:hidden;font-family:"Liberation Sans","Noto Sans CJK SC",sans-serif;font-size:12px}
.below{flex:1;display:flex;min-height:0}
.col{flex:1;display:flex;flex-direction:column;min-width:0}
.work{flex:1;display:flex;min-height:0}
.main{flex:1;display:flex;flex-direction:column;min-width:0}
.cursor{position:absolute;left:1134px;top:848px}
    </style>
    <title-bar></title-bar>
    <div class="below">
      <side-rail></side-rail>
      <div class="col">
        <menu-row></menu-row>
        <ribbon-bar></ribbon-bar>
        <div class="work">
          <tree-pane></tree-pane>
          <div class="main">
            <tab-strip></tab-strip>
            <cad-view><tool-panel></tool-panel><prop-panel></prop-panel></cad-view>
          </div>
        </div>
        <status-bar></status-bar>
      </div>
    </div>
    <svg class="cursor" width="13" height="19" viewBox="0 0 13 19"><path d="M.5 .5V15.500L4 12.500L6.500 18L9 17L6.500 11.500H11.500Z" fill="#fff" stroke="#111"/></svg>`;
  }
}

customElements.define('x-icon', XIcon);
customElements.define('title-bar', TitleBar);
customElements.define('side-rail', SideRail);
customElements.define('menu-row', MenuRow);
customElements.define('rb-btn', RbBtn);
customElements.define('rb-group', RbGroup);
customElements.define('ribbon-bar', RibbonBar);
customElements.define('tree-row', TreeRow);
customElements.define('tree-pane', TreePane);
customElements.define('doc-tab', DocTab);
customElements.define('tab-strip', TabStrip);
customElements.define('cad-view', CadView);
customElements.define('tool-panel', ToolPanel);
customElements.define('prop-row', PropRow);
customElements.define('prop-section', PropSection);
customElements.define('prop-panel', PropPanel);
customElements.define('status-bar', StatusBar);
customElements.define('app-shell', AppShell);
</script>
</body>
</html>
